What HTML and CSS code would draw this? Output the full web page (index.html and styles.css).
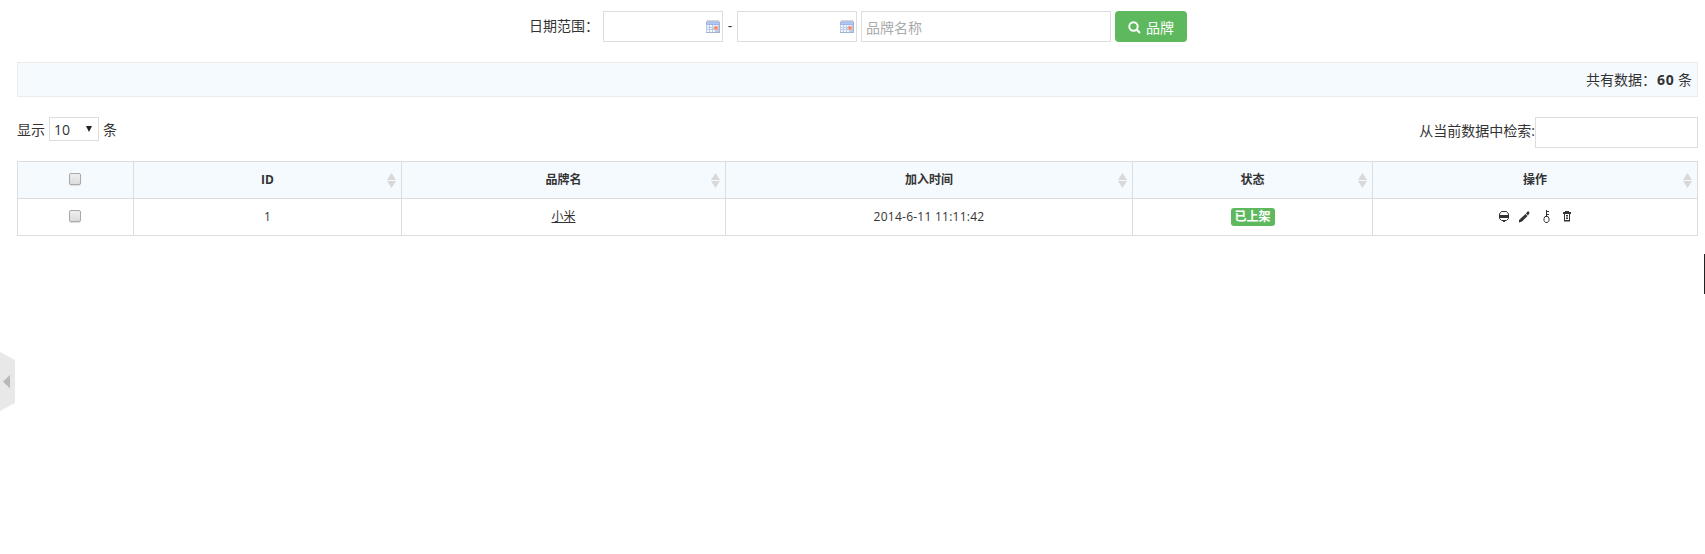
FILE: index.html
```html
<!DOCTYPE html>
<html lang="zh-CN">
<head>
<meta charset="utf-8">
<title>品牌</title>
<link rel="stylesheet" href="styles.css">
</head>
<body>
<svg class="defs" width="0" height="0">
  <symbol id="cal" viewBox="0 0 14 13">
    <path fill="#d3d4d6" d="M1 0h12v2H1z"/>
    <path fill="#9db4ec" d="M0 1.500h14V5H0z"/>
    <path fill="#b3c8f5" d="M1 2.500h12V4H1z"/>
    <path fill="#bccbe6" d="M0 5h14v8H0z"/>
    <path fill="#a3b4cf" d="M13 5h1v8H0v-1h13z"/>
    <path fill="#f2f7fe" d="M1 5h2v2H1zM4 5h2v2H4zM7 5h2v2H7zM10 5h2v2h-2zM1 8h2v1H1zM4 8h2v1H4zM1 10h2v2H1zM4 10h2v2H4zM7 10h2v2H7z"/>
    <path fill="#f3ab9a" d="M8 6h4v4H8z"/>
    <path fill="#ee8468" d="M9 7h2v2H9z"/>
  </symbol>
  <symbol id="sort" viewBox="0 0 9 15">
    <path fill="#d8d8d8" d="M4.500 0L9 7H0zM0 8h9l-4.500 7z"/>
  </symbol>
</svg>
<form class="filter">
  <span class="filter-label">日期范围：</span>
  <span class="field date"><svg width="14" height="13"><use href="#cal"/></svg></span>
  <span class="dash">-</span>
  <span class="field date"><svg width="14" height="13"><use href="#cal"/></svg></span>
  <input class="field name" type="text" placeholder="品牌名称">
  <button class="btn" type="button"><svg width="13" height="13" viewBox="0 0 13 13"><circle cx="5.500" cy="5.500" r="4.200" fill="none" stroke="#fff" stroke-width="2"/><path d="M8.500 8.500l3.500 3.500" stroke="#fff" stroke-width="2.200"/></svg><span>品牌</span></button>
</form>
<div class="summary">共有数据：<strong>60</strong> 条</div>
<div class="tools">
  <div class="length"><span>显示</span><span class="select">10<svg width="6" height="6" viewBox="0 0 6 6"><path fill="#222" d="M0 0h6L3 6z"/></svg></span><span>条</span></div>
  <label class="search"><span>从当前数据中检索:</span><input class="field" type="text"></label>
</div>
<table class="grid">
  <colgroup><col class="c1"><col class="c2"><col class="c3"><col class="c4"><col class="c5"><col class="c6"></colgroup>
  <thead>
    <tr>
      <th><span class="check"></span></th>
      <th>ID<svg class="sort" width="9" height="15"><use href="#sort"/></svg></th>
      <th>品牌名<svg class="sort" width="9" height="15"><use href="#sort"/></svg></th>
      <th>加入时间<svg class="sort" width="9" height="15"><use href="#sort"/></svg></th>
      <th>状态<svg class="sort" width="9" height="15"><use href="#sort"/></svg></th>
      <th>操作<svg class="sort" width="9" height="15"><use href="#sort"/></svg></th>
    </tr>
  </thead>
  <tbody>
    <tr>
      <td><span class="check"></span></td>
      <td>1</td>
      <td><u>小米</u></td>
      <td class="time">2014-6-11 11:11:42</td>
      <td><span class="label">已上架</span></td>
      <td><div class="actions">
        <svg width="10" height="12" viewBox="0 0 10 12"><path fill="none" stroke="#333" d="M2.500.500h5l2 2.500v4.500l-2 2h-5l-2-2V3z"/><path fill="#333" d="M1 4h8v3H1zM4 10h2v1H4z"/></svg>
        <svg width="11" height="12" viewBox="0 0 11 12"><path fill="#333" d="M0 11.500V9l6.500-6 2 2L3 10.500zM7 2.500L8.500.500H10l.5 1.500L9 4.500z"/></svg>
        <svg width="7" height="13" viewBox="0 0 7 13"><path fill="none" stroke="#333" d="M3.500 0v6.500M3.500 1.500H6M3.500 4.500H6M2 6.500h3l1 2v2l-1.500 2h-2l-1.500-2v-2z"/></svg>
        <svg width="8" height="11" viewBox="0 0 8 11"><path fill="#333" d="M2 0h4v1h2v2H0V1h2zM1 3h1v7H1zM6 3h1v7H6zM1 9h6v1.500H1zM3 4h2v1h-.5v2H5v1H3V7h.5V5H3z"/></svg>
      </div></td>
    </tr>
  </tbody>
</table>
<svg class="handle" width="15" height="60" viewBox="0 0 15 60"><path fill="#e8e8e8" d="M0 0l15 8v43L0 59z"/><path fill="#b8b8b8" d="M3 29.500L10 23v13.500z"/></svg>
<div class="edge"></div>
</body>
</html>
```
FILE: styles.css
```css
* { box-sizing: border-box; }
body {
  margin: 0;
  height: 554px;
  padding: 11px 7px 0 17px;
  overflow: hidden;
  position: relative;
  background: #fff;
  color: #333;
  font: 14px/22px "Open Sans", "Noto Sans CJK SC", sans-serif;
}
.defs { position: absolute; }
svg { display: block; }
.filter { display: flex; height: 31px; padding-left: 512px; }
.filter-label { width: 74px; line-height: 29px; white-space: nowrap; }
.field {
  height: 31px;
  border: 1px solid #ddd;
  background: #fff;
  padding: 2px 4px 0;
  font: inherit;
  outline: none;
}
.date { width: 120px; display: flex; justify-content: flex-end; padding: 8px 2px 0; }
.dash { width: 14px; text-align: center; line-height: 29px; }
.name { width: 250px; margin-left: 4px; }
.name::placeholder { color: #aaa; opacity: 1; }
.btn {
  width: 72px;
  height: 31px;
  margin-left: 4px;
  padding: 2px 0 0;
  display: flex;
  align-items: center;
  justify-content: center;
  gap: 5px;
  border: 0;
  border-radius: 4px;
  background: #5eb95e;
  color: #fff;
  font: inherit;
}
.btn svg { margin-top: -1px; }
.summary {
  height: 35px;
  margin-top: 20px;
  padding: 0 5px;
  border: 1px solid #ebebeb;
  background: #f5fafe;
  line-height: 33px;
  text-align: right;
}
.summary strong { letter-spacing: 0.7px; margin-left: 1px; }
.tools { display: flex; justify-content: space-between; height: 44px; margin-top: 20px; }
.length { display: flex; gap: 4px; height: 24px; line-height: 25px; }
.select {
  width: 50px;
  height: 24px;
  padding: 0 6px 0 4px;
  display: flex;
  align-items: center;
  justify-content: space-between;
  border: 1px solid #ddd;
}
.search { display: flex; line-height: 28px; }
.search .field { width: 163px; }
.grid {
  width: 1681px;
  table-layout: fixed;
  border-collapse: separate;
  border-spacing: 0;
  border: solid #ddd;
  border-width: 1px 0 0 1px;
  font-size: 12px;
  line-height: 20px;
}
.c1 { width: 116px; }
.c2 { width: 268px; }
.c3 { width: 324px; }
.c4 { width: 407px; }
.c5 { width: 240px; }
.c6 { width: 325px; }
th, td {
  position: relative;
  height: 37px;
  padding: 0;
  border: solid #ddd;
  border-width: 0 1px 1px 0;
  text-align: center;
  vertical-align: middle;
}
th { background: #f5fafe; }
.time { letter-spacing: 0.25px; }
.sort { position: absolute; right: 5px; top: 11px; }
.check {
  display: block;
  width: 12px;
  height: 12px;
  margin: -2px 0 0 51px;
  border: 1px solid #a9a9a9;
  border-radius: 2px;
  background: linear-gradient(#eee, #dcdcdc);
  box-shadow: 0 1px 1px #ddd;
}
.label {
  display: block;
  width: 44px;
  height: 18px;
  margin: 0 auto;
  border-radius: 3px;
  background: #5eb95e;
  color: #fff;
  font-weight: 700;
  line-height: 17px;
}
.actions { display: flex; justify-content: center; align-items: center; padding: 0 1px 1px 0; }
.actions svg + svg { margin-left: 10px; }
.actions svg:nth-child(3) { margin-left: 13px; }
.actions svg:nth-child(4) { margin-left: 13px; }
.handle { position: absolute; left: 0; top: 352px; }
.edge { position: absolute; right: 0; top: 254px; width: 1px; height: 40px; background: #222; }
```
